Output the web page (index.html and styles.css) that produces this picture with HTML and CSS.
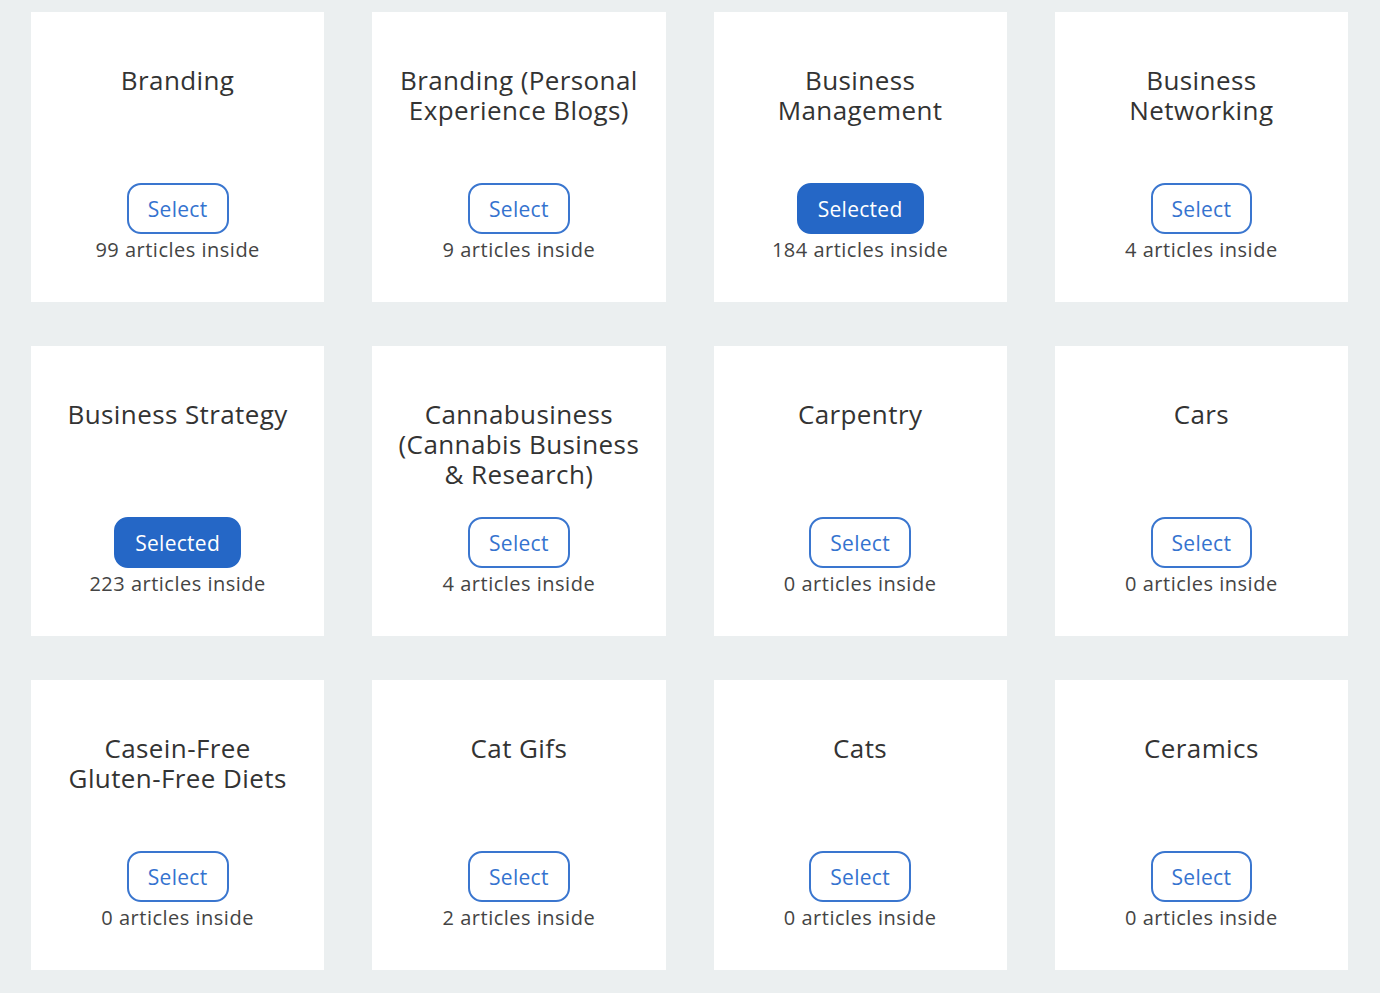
FILE: index.html
```html
<!DOCTYPE html>
<html lang="en">
<head>
  <meta charset="UTF-8">
  <meta name="viewport" content="width=device-width, initial-scale=1.0">
  <title>Topics</title>
  <link rel="stylesheet" href="styles.css">
</head>
<body>
  <!-- Topic grid -->
  <main class="topics">
    <div class="topic">
      <h3 class="topic-title">Branding</h3>
      <button class="select-btn">Select</button>
      <p class="count">99 articles inside</p>
    </div>
    <div class="topic">
      <h3 class="topic-title">Branding (Personal Experience Blogs)</h3>
      <button class="select-btn">Select</button>
      <p class="count">9 articles inside</p>
    </div>
    <div class="topic">
      <h3 class="topic-title">Business Management</h3>
      <button class="select-btn selected">Selected</button>
      <p class="count">184 articles inside</p>
    </div>
    <div class="topic">
      <h3 class="topic-title">Business Networking</h3>
      <button class="select-btn">Select</button>
      <p class="count">4 articles inside</p>
    </div>

    <div class="topic">
      <h3 class="topic-title">Business Strategy</h3>
      <button class="select-btn selected">Selected</button>
      <p class="count">223 articles inside</p>
    </div>
    <div class="topic">
      <h3 class="topic-title">Cannabusiness (Cannabis Business &amp; Research)</h3>
      <button class="select-btn">Select</button>
      <p class="count">4 articles inside</p>
    </div>
    <div class="topic">
      <h3 class="topic-title">Carpentry</h3>
      <button class="select-btn">Select</button>
      <p class="count">0 articles inside</p>
    </div>
    <div class="topic">
      <h3 class="topic-title">Cars</h3>
      <button class="select-btn">Select</button>
      <p class="count">0 articles inside</p>
    </div>

    <div class="topic">
      <h3 class="topic-title">Casein-Free <span class="nowrap">Gluten-Free</span> Diets</h3>
      <button class="select-btn">Select</button>
      <p class="count">0 articles inside</p>
    </div>
    <div class="topic">
      <h3 class="topic-title">Cat Gifs</h3>
      <button class="select-btn">Select</button>
      <p class="count">2 articles inside</p>
    </div>
    <div class="topic">
      <h3 class="topic-title">Cats</h3>
      <button class="select-btn">Select</button>
      <p class="count">0 articles inside</p>
    </div>
    <div class="topic">
      <h3 class="topic-title">Ceramics</h3>
      <button class="select-btn">Select</button>
      <p class="count">0 articles inside</p>
    </div>
  </main>
</body>
</html>
```

FILE: styles.css
```css
/* Base */
* {
  margin: 0;
  padding: 0;
  box-sizing: border-box;
}
body {
  background: #ebeff0;
  color: #333;
  font-family: "Open Sans", Arial, sans-serif;
}
/* Grid */
.topics {
  display: grid;
  grid-template-columns: repeat(4, 1fr);
  column-gap: 48px;
  row-gap: 44px;
  padding: 12px 32px 12px 31px;
}
/* Card */
.topic {
  background: #fff;
  height: 290px;
  padding: 53px 18px 0;
  display: flex;
  flex-direction: column;
  align-items: center;
  text-align: center;
}
.topic-title {
  font-size: 26px;
  font-weight: normal;
  line-height: 30px;
  letter-spacing: 0.4px;
  color: #333;
  height: 118px;
}
.nowrap {
  white-space: nowrap;
}
.select-btn {
  font-family: inherit;
  font-size: 21px;
  letter-spacing: 0.3px;
  height: 51px;
  padding: 0 19px;
  border: 2px solid #3a76cf;
  border-radius: 14px;
  background: #fff;
  color: #3573cf;
  cursor: pointer;
}
.select-btn.selected {
  background: #2567c6;
  border-color: #2567c6;
  color: #fff;
}
.count {
  margin-top: 4px;
  font-size: 20px;
  line-height: 24px;
  letter-spacing: 0.5px;
  color: #444;
}
```
